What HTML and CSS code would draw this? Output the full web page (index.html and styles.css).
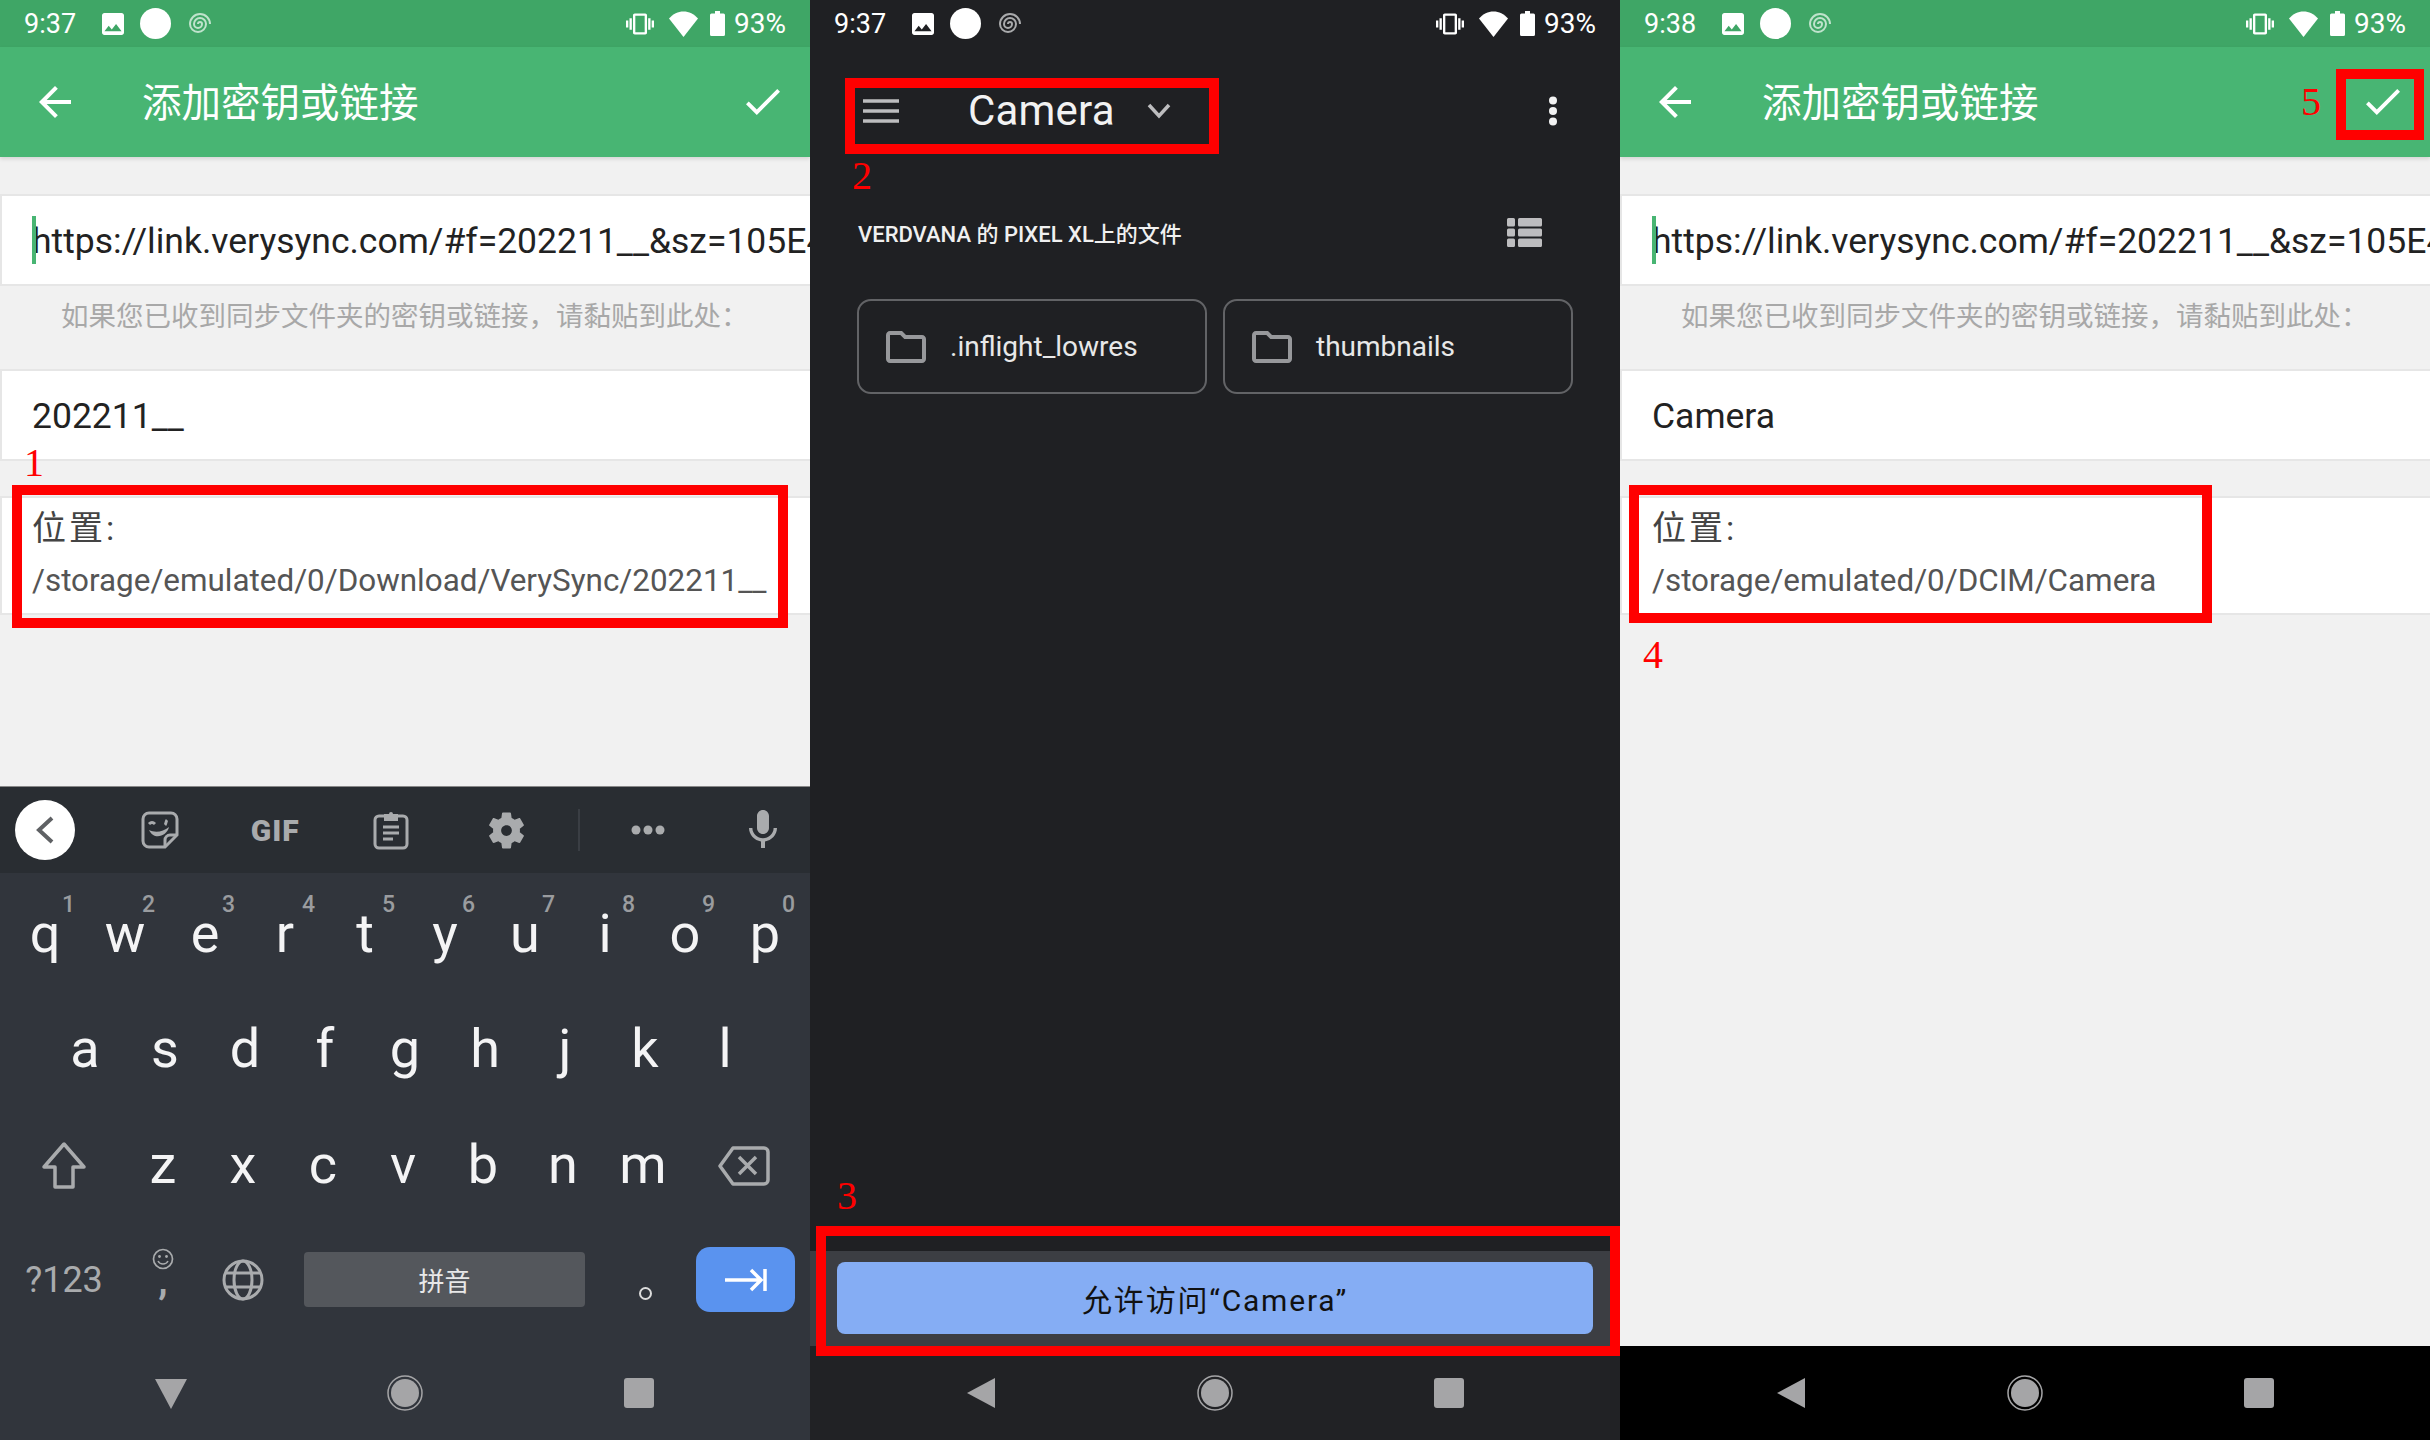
FILE: index.html
```html
<!DOCTYPE html>
<html lang="zh-CN">
<head>
<meta charset="UTF-8">
<title>Add key or link</title>
<link rel="stylesheet" href="styles.css">
</head>
<body>

<!-- shared icons -->
<svg class="defs" xmlns="http://www.w3.org/2000/svg">
  <symbol id="i-image" viewBox="3 3 18 18"><path fill="currentColor" fill-rule="evenodd" d="M21 19V5c0-1.1-.9-2-2-2H5c-1.1 0-2 .9-2 2v14c0 1.1.9 2 2 2h14c1.1 0 2-.9 2-2zM8.5 13.5l2.5 3.01L14.5 12l4.5 6H5l3.5-4.5z"/></symbol>
  <symbol id="i-swirl" viewBox="1 0 24 24"><path fill="none" stroke="currentColor" stroke-width="2" d="M12 12a2 2 0 0 1 4 0a4 4 0 0 1-8 0a6 6 0 0 1 12 0a8 8 0 0 1-16 0a10 10 0 0 1 20 0"/></symbol>
  <symbol id="i-vibrate" viewBox="0 0 24 24"><path fill="currentColor" d="M0 15h2V9H0v6zm3 2h2V7H3v10zm19-8v6h2V9h-2zm-3 8h2V7h-2v10zM16.500 3h-9C6.670 3 6 3.670 6 4.500v15c0 .83.67 1.500 1.500 1.500h9c.83 0 1.500-.67 1.500-1.500v-15c0-.83-.67-1.500-1.500-1.500zM16 19H8V5h8v14z"/></symbol>
  <symbol id="i-wifi" viewBox="0 0 29 26"><path fill="currentColor" d="M14.500 26 29 7.500C25 3 20 .5 14.500.5S4 3 0 7.500z"/></symbol>
  <symbol id="i-battery" viewBox="0 0 15 25"><path fill="currentColor" d="M5 0h5v2.500h3.500a1.500 1.500 0 0 1 1.500 1.500v19.500a1.500 1.500 0 0 1-1.500 1.500h-12A1.500 1.500 0 0 1 0 23.500V4a1.500 1.500 0 0 1 1.500-1.500H5z"/></symbol>
  <symbol id="i-back" viewBox="4 4 16 16"><path fill="currentColor" d="M20 11H7.830l5.590-5.590L12 4l-8 8 8 8 1.410-1.410L7.830 13H20v-2z"/></symbol>
  <symbol id="i-check" viewBox="3.400 5.600 17.600 13.400"><path fill="currentColor" d="M9 16.170L4.830 12l-1.420 1.410L9 19 21 7l-1.410-1.410z"/></symbol>
  <symbol id="i-folder" viewBox="2 4 20 16"><path fill="currentColor" d="M20 6h-8l-2-2H4c-1.100 0-1.990.9-1.990 2L2 18c0 1.100.9 2 2 2h16c1.100 0 2-.9 2-2V8c0-1.100-.9-2-2-2zm0 12H4V6h5.170l2 2H20v10z"/></symbol>
</svg>

<div class="screen">

  <!-- left phone: key form with keyboard -->
  <section class="phone phone-light">
    <div class="status status-green">
      <span class="clock">9:37</span>
      <svg class="ic-image"><use href="#i-image"/></svg>
      <span class="dot"></span>
      <svg class="ic-swirl"><use href="#i-swirl"/></svg>
      <span class="status-right">
        <svg class="ic-vibrate"><use href="#i-vibrate"/></svg>
        <svg class="ic-wifi"><use href="#i-wifi"/></svg>
        <svg class="ic-battery"><use href="#i-battery"/></svg>
        <span class="pct">93%</span>
      </span>
    </div>
    <header class="toolbar">
      <svg class="ic-back"><use href="#i-back"/></svg>
      <h1 class="toolbar-title">添加密钥或链接</h1>
      <svg class="ic-check"><use href="#i-check"/></svg>
    </header>
    <main class="form">
      <div class="field field-url"><span class="caret"></span>https://link.verysync.com/#f=202211__&amp;sz=105E4</div>
      <p class="hint">如果您已收到同步文件夹的密钥或链接，请黏贴到此处：</p>
      <div class="field">202211__</div>
      <div class="field-loc">
        <div class="loc-label">位置:</div>
        <div class="loc-path">/storage/emulated/0/Download/VerySync/202211__</div>
      </div>
    </main>
    <div class="keyboard">
      <div class="kb-tools">
        <span class="tool tool-first"><span class="collapse"><svg width="24" height="32" viewBox="0 0 24 32"><path d="M19 4 6 16l13 12" fill="none" stroke="#5f6164" stroke-width="4"/></svg></span></span>
        <span class="tool"><svg width="38" height="38" viewBox="0 0 38 38"><path d="M8 2h22a6 6 0 0 1 6 6v16L24 36H8a6 6 0 0 1-6-6V8a6 6 0 0 1 6-6z" fill="none" stroke="currentColor" stroke-width="3"/><path d="M36 24h-7a5 5 0 0 0-5 5v7" fill="none" stroke="currentColor" stroke-width="3"/><path d="M8 13c2-2 4-2 6 0M24 14c1-1 1-4 2-5" fill="none" stroke="currentColor" stroke-width="3"/><path fill="currentColor" d="M8 19c6 3 14 2 20-3-2 9-15 14-20 3z"/></svg></span>
        <span class="tool tool-gif">GIF</span>
        <span class="tool"><svg width="36" height="40" viewBox="0 0 36 40"><rect x="2" y="6" width="32" height="32" rx="4" fill="none" stroke="currentColor" stroke-width="3"/><path fill="currentColor" d="M11 4h5a2 2 0 0 1 4 0h5v7H11z"/><path d="M10 17h16M10 23h16M10 29h10" stroke="currentColor" stroke-width="3"/></svg></span>
        <span class="tool"><svg width="43" height="43" viewBox="0 0 24 24"><path fill="currentColor" fill-rule="evenodd" d="M19.430 12.980c.04-.32.07-.64.07-.98s-.03-.66-.07-.98l2.110-1.650c.19-.15.24-.42.12-.64l-2-3.460c-.12-.22-.39-.3-.61-.22l-2.490 1c-.52-.4-1.080-.73-1.690-.98l-.38-2.650C14.460 2.180 14.250 2 14 2h-4c-.25 0-.46.18-.49.42l-.38 2.650c-.61.25-1.170.59-1.690.98l-2.490-1c-.23-.09-.49 0-.61.22l-2 3.460c-.13.22-.07.49.12.64l2.110 1.650c-.04.32-.07.65-.07.98s.03.66.07.98l-2.110 1.650c-.19.15-.24.42-.12.64l2 3.460c.12.22.39.3.61.22l2.490-1c.52.4 1.080.73 1.690.98l.38 2.650c.03.24.24.42.49.42h4c.25 0 .46-.18.49-.42l.38-2.650c.61-.25 1.170-.59 1.690-.98l2.490 1c.23.09.49 0 .61-.22l2-3.460c.12-.22.07-.49-.12-.64l-2.110-1.650zM12 15c-1.660 0-3-1.340-3-3s1.340-3 3-3 3 1.340 3 3-1.340 3-3 3z"/></svg></span>
        <span class="tool-divider"></span>
        <span class="tool tool-wide"><svg width="34" height="10" viewBox="0 0 34 10"><circle cx="5" cy="5" r="4.500" fill="currentColor"/><circle cx="17" cy="5" r="4.500" fill="currentColor"/><circle cx="29" cy="5" r="4.500" fill="currentColor"/></svg></span>
        <span class="tool tool-last"><svg width="48" height="48" viewBox="0 0 24 24"><path fill="currentColor" d="M12 14c1.660 0 2.990-1.340 2.990-3L15 5c0-1.660-1.340-3-3-3S9 3.340 9 5v6c0 1.660 1.340 3 3 3zm5.300-3c0 3-2.540 5.100-5.300 5.100S6.700 14 6.700 11H5c0 3.410 2.720 6.230 6 6.720V21h2v-3.280c3.280-.48 6-3.300 6-6.720h-1.700z"/></svg></span>
      </div>
      <div class="kb-row row-top">
        <span class="key">q<sup class="num">1</sup></span>
        <span class="key">w<sup class="num">2</sup></span>
        <span class="key">e<sup class="num">3</sup></span>
        <span class="key">r<sup class="num">4</sup></span>
        <span class="key">t<sup class="num">5</sup></span>
        <span class="key">y<sup class="num">6</sup></span>
        <span class="key">u<sup class="num">7</sup></span>
        <span class="key">i<sup class="num">8</sup></span>
        <span class="key">o<sup class="num">9</sup></span>
        <span class="key">p<sup class="num">0</sup></span>
      </div>
      <div class="kb-row row-home">
        <span class="key">a</span><span class="key">s</span><span class="key">d</span><span class="key">f</span><span class="key">g</span><span class="key">h</span><span class="key">j</span><span class="key">k</span><span class="key">l</span>
      </div>
      <div class="kb-row row-shift">
        <span class="key key-side"><svg width="46" height="50" viewBox="0 0 46 50"><path d="M23 3 3 26h11v20h18V26h11z" fill="none" stroke="currentColor" stroke-width="3.500" stroke-linejoin="round"/></svg></span>
        <span class="key">z</span><span class="key">x</span><span class="key">c</span><span class="key">v</span><span class="key">b</span><span class="key">n</span><span class="key">m</span>
        <span class="key key-del"><svg width="52" height="40" viewBox="0 0 52 40"><path d="M15 2h31a4 4 0 0 1 4 4v28a4 4 0 0 1-4 4H15L2 20z" fill="none" stroke="currentColor" stroke-width="3.500" stroke-linejoin="round"/><path d="m21 11 17 17m0-17L21 28" stroke="currentColor" stroke-width="3.500"/></svg></span>
      </div>
      <div class="kb-row">
        <span class="key key-side key-sym">?123</span>
        <span class="key key-comma"><svg width="22" height="22" viewBox="0 0 22 22"><circle cx="11" cy="11" r="9.500" fill="none" stroke="currentColor" stroke-width="1.700"/><circle cx="7.500" cy="8.500" r="1.400" fill="currentColor"/><circle cx="14.500" cy="8.500" r="1.400" fill="currentColor"/><path d="M6 13c2 4 8 4 10 0" fill="none" stroke="currentColor" stroke-width="1.500"/></svg><span class="comma">,</span></span>
        <span class="key"><svg width="42" height="42" viewBox="0 0 42 42"><g fill="none" stroke="currentColor" stroke-width="3"><circle cx="21" cy="21" r="19"/><ellipse cx="21" cy="21" rx="9" ry="19"/><path d="M4 14h34M4 28h34"/></g></svg></span>
        <span class="key-space">拼音</span>
        <span class="key key-stop"><span class="stop"></span></span>
        <span class="key-enter"><svg width="42" height="24" viewBox="0 0 42 24"><path d="M0 12h36M26 2l10 10-10 10M40 1v22" fill="none" stroke="#fff" stroke-width="3.500"/></svg></span>
      </div>
      <nav class="navbar">
        <svg width="34" height="34" viewBox="0 0 34 34"><path fill="currentColor" d="M1 3h32L17 33z"/></svg>
        <svg width="36" height="36" viewBox="0 0 36 36"><circle cx="18" cy="18" r="17" fill="none" stroke="currentColor" stroke-width="1.500"/><circle cx="18" cy="18" r="14" fill="currentColor"/></svg>
        <span class="nav-square"></span>
      </nav>
    </div>
    <div class="mark mark-1"></div>
    <span class="mark-num num-1">1</span>
  </section>

  <!-- middle phone: folder picker -->
  <section class="phone phone-dark">
    <div class="status">
      <span class="clock">9:37</span>
      <svg class="ic-image"><use href="#i-image"/></svg>
      <span class="dot"></span>
      <svg class="ic-swirl ic-swirl-dark"><use href="#i-swirl"/></svg>
      <span class="status-right">
        <svg class="ic-vibrate"><use href="#i-vibrate"/></svg>
        <svg class="ic-wifi"><use href="#i-wifi"/></svg>
        <svg class="ic-battery"><use href="#i-battery"/></svg>
        <span class="pct">93%</span>
      </span>
    </div>
    <header class="picker-bar">
      <svg class="ic-menu" viewBox="0 0 36 24"><path d="M0 2h36M0 12h36M0 22h36" stroke="#bdbdbf" stroke-width="3.500"/></svg>
      <h2 class="picker-title">Camera</h2>
      <svg class="ic-chevron" viewBox="0 0 24 16"><path d="m2 2 10 11L22 2" fill="none" stroke="#bdbdbf" stroke-width="3.500"/></svg>
      <svg class="ic-more" viewBox="0 0 10 30"><circle cx="5" cy="4.500" r="4" fill="#f2f2f2"/><circle cx="5" cy="15" r="4" fill="#f2f2f2"/><circle cx="5" cy="25.500" r="4" fill="#f2f2f2"/></svg>
    </header>
    <div class="picker-sub">
      <span class="picker-source">VERDVANA 的 PIXEL XL上的文件</span>
      <svg class="ic-list" viewBox="0 0 35 29"><path fill="#bdbdbf" d="M0 1.500A1.500 1.500 0 0 1 1.500 0h5A1.500 1.500 0 0 1 8 1.500V7a1.500 1.500 0 0 1-1.500 1.500h-5A1.500 1.500 0 0 1 0 7zM0 12a1.500 1.500 0 0 1 1.500-1.500h5A1.500 1.500 0 0 1 8 12v5a1.500 1.500 0 0 1-1.500 1.500h-5A1.500 1.500 0 0 1 0 17zM0 22a1.500 1.500 0 0 1 1.500-1.500h5A1.500 1.500 0 0 1 8 22v5.500A1.500 1.500 0 0 1 6.500 29h-5A1.500 1.500 0 0 1 0 27.500zM11 1.500A1.500 1.500 0 0 1 12.500 0h21A1.500 1.500 0 0 1 35 1.500V7a1.500 1.500 0 0 1-1.500 1.500h-21A1.500 1.500 0 0 1 11 7zM11 12a1.500 1.500 0 0 1 1.500-1.500h21A1.500 1.500 0 0 1 35 12v5a1.500 1.500 0 0 1-1.500 1.500h-21A1.500 1.500 0 0 1 11 17zM11 22a1.500 1.500 0 0 1 1.500-1.500h21A1.500 1.500 0 0 1 35 22v5.500a1.500 1.500 0 0 1-1.500 1.500h-21a1.500 1.500 0 0 1-1.500-1.500z"/></svg>
    </div>
    <div class="folders">
      <div class="folder"><svg class="ic-folder"><use href="#i-folder"/></svg>.inflight_lowres</div>
      <div class="folder"><svg class="ic-folder"><use href="#i-folder"/></svg>thumbnails</div>
    </div>
    <div class="allow-bar"><button class="allow-btn">允许访问“Camera”</button></div>
    <nav class="navbar navbar-back">
      <svg width="34" height="34" viewBox="0 0 34 34"><path fill="currentColor" d="M31 2v30L3 17z"/></svg>
      <svg width="36" height="36" viewBox="0 0 36 36"><circle cx="18" cy="18" r="17" fill="none" stroke="currentColor" stroke-width="1.500"/><circle cx="18" cy="18" r="14" fill="currentColor"/></svg>
      <span class="nav-square"></span>
    </nav>
    <div class="mark mark-2"></div>
    <span class="mark-num num-2">2</span>
    <div class="mark mark-3"></div>
    <span class="mark-num num-3">3</span>
  </section>

  <!-- right phone: finished form -->
  <section class="phone phone-light">
    <div class="status status-green">
      <span class="clock">9:38</span>
      <svg class="ic-image"><use href="#i-image"/></svg>
      <span class="dot"></span>
      <svg class="ic-swirl"><use href="#i-swirl"/></svg>
      <span class="status-right">
        <svg class="ic-vibrate"><use href="#i-vibrate"/></svg>
        <svg class="ic-wifi"><use href="#i-wifi"/></svg>
        <svg class="ic-battery"><use href="#i-battery"/></svg>
        <span class="pct">93%</span>
      </span>
    </div>
    <header class="toolbar">
      <svg class="ic-back"><use href="#i-back"/></svg>
      <h1 class="toolbar-title">添加密钥或链接</h1>
      <svg class="ic-check"><use href="#i-check"/></svg>
    </header>
    <main class="form">
      <div class="field field-url"><span class="caret"></span>https://link.verysync.com/#f=202211__&amp;sz=105E4</div>
      <p class="hint">如果您已收到同步文件夹的密钥或链接，请黏贴到此处：</p>
      <div class="field">Camera</div>
      <div class="field-loc">
        <div class="loc-label">位置:</div>
        <div class="loc-path">/storage/emulated/0/DCIM/Camera</div>
      </div>
    </main>
    <nav class="navbar navbar-back navbar-black">
      <svg width="34" height="34" viewBox="0 0 34 34"><path fill="currentColor" d="M31 2v30L3 17z"/></svg>
      <svg width="36" height="36" viewBox="0 0 36 36"><circle cx="18" cy="18" r="17" fill="none" stroke="currentColor" stroke-width="1.500"/><circle cx="18" cy="18" r="14" fill="currentColor"/></svg>
      <span class="nav-square"></span>
    </nav>
    <div class="mark mark-4"></div>
    <span class="mark-num num-4">4</span>
    <div class="mark mark-5"></div>
    <span class="mark-num num-5">5</span>
  </section>

</div>
</body>
</html>
```

FILE: styles.css
```css
* {
    box-sizing: border-box;
}
body {
    margin: 0;
    font-family: Roboto, "Noto Sans CJK SC", sans-serif;
    background: #1f2023;
}
.defs {
    display: none;
}
.screen {
    display: flex;
    width: 2430px;
    height: 1440px;
    overflow: hidden;
}
.phone {
    position: relative;
    display: flex;
    flex-direction: column;
    width: 810px;
    height: 1440px;
    overflow: hidden;
}
.phone-light {
    background: #f1f1f1;
}
.phone-dark {
    background: #1f2023;
}

/* status bar */
.status {
    display: flex;
    align-items: center;
    flex: none;
    height: 47px;
    padding: 0 24px;
    color: #fff;
}
.status-green {
    background: #3fa666;
}
.clock {
    font-size: 27px;
}
.pct {
    font-size: 28px;
}
.ic-image {
    width: 22px;
    height: 22px;
    margin-left: 26px;
}
.dot {
    width: 31px;
    height: 31px;
    margin-left: 16px;
    border-radius: 50%;
    background: #fff;
}
.ic-swirl {
    width: 24px;
    height: 24px;
    margin-left: 16px;
    color: #bfe3cc;
}
.ic-swirl-dark {
    color: #a9aaac;
}
.status-right {
    display: flex;
    align-items: center;
    margin-left: auto;
}
.ic-vibrate {
    width: 28px;
    height: 28px;
}
.ic-wifi {
    width: 29px;
    height: 26px;
    margin-left: 15px;
}
.ic-battery {
    width: 15px;
    height: 25px;
    margin-left: 12px;
}
.pct {
    margin-left: 9px;
}

/* green toolbar */
.toolbar {
    display: flex;
    align-items: center;
    flex: none;
    height: 110px;
    padding: 0 30px 0 39px;
    color: #fff;
    background: #48b573;
    box-shadow: 0 2px 4px rgba(0, 0, 0, 0.12);
    z-index: 1;
}
.ic-back {
    width: 32px;
    height: 32px;
}
.toolbar-title {
    margin: 4px 0 0 71px;
    font-size: 39.500px;
    font-weight: 400;
    line-height: 1;
}
.ic-check {
    width: 34px;
    height: 26px;
    margin-left: auto;
}

/* form */
.form {
    flex: 1;
    padding-top: 37px;
}
.field {
    display: flex;
    align-items: center;
    height: 92px;
    padding: 2px 0 0 30px;
    font-size: 35.500px;
    color: #222;
    white-space: nowrap;
    overflow: hidden;
    background: #fff;
    border: 2px solid #e6e6e6;
    border-right: none;
}
.field-url {
    position: relative;
}
.caret {
    position: absolute;
    left: 30px;
    top: 20px;
    width: 4px;
    height: 48px;
    background: #48b573;
}
.hint {
    height: 83px;
    margin: 0;
    padding: 13px 0 0 61px;
    font-size: 27.500px;
    line-height: 36px;
    color: #a8a8a8;
}
.field-loc {
    height: 119px;
    margin-top: 35px;
    padding: 10px 0 0 30px;
    background: #fff;
    border: 2px solid #e6e6e6;
    border-right: none;
}
.loc-label {
    font-size: 34px;
    line-height: 40px;
    letter-spacing: 3px;
    color: #444;
}
.loc-path {
    margin-top: 13px;
    font-size: 31.400px;
    line-height: 40px;
    color: #555;
    white-space: nowrap;
}

/* keyboard */
.keyboard {
    display: flex;
    flex-direction: column;
    flex: none;
    height: 654px;
    background: #31353c;
    border-top: 1px solid #888;
}
.kb-tools {
    display: flex;
    align-items: center;
    flex: none;
    height: 86px;
    margin-bottom: 3px;
    color: #a9abad;
    background: #292d32;
}
.tool {
    display: flex;
    align-items: center;
    justify-content: center;
    flex: none;
    width: 115.500px;
}
.tool-first {
    width: 102px;
    padding-right: 12px;
}
.collapse {
    display: flex;
    align-items: center;
    justify-content: center;
    width: 60px;
    height: 60px;
    border-radius: 50%;
    background: #fff;
}
.tool-gif {
    font-size: 30px;
    font-weight: 900;
    letter-spacing: 1px;
}
.tool-divider {
    flex: none;
    width: 2px;
    height: 42px;
    margin-left: 14px;
    background: #3a3e44;
}
.tool-wide {
    width: 136px;
}
.tool-last {
    width: 94px;
}
.kb-row {
    display: flex;
    flex: none;
    height: 115px;
    padding-left: 5px;
}
.row-home {
    padding-left: 45px;
}
.row-shift {
    margin-top: 1px;
}
.row-shift svg {
    margin-top: 2px;
}
.key {
    position: relative;
    display: flex;
    align-items: center;
    justify-content: center;
    flex: none;
    width: 80px;
    font-size: 54px;
    color: #f4f4f5;
}
.key svg {
    color: #a9abad;
}
.num {
    position: absolute;
    top: 17px;
    left: 57px;
    font-size: 23px;
    font-weight: 500;
    line-height: 1;
    color: #9a9c9f;
}
.key-side {
    width: 118px;
}
.key-del {
    width: 122px;
}
.key-sym {
    font-size: 36px;
    color: #a9abad;
}
.key-comma {
    flex-direction: column;
    justify-content: flex-start;
    padding-top: 26px;
    font-size: 38px;
    line-height: 38px;
    color: #a9abad;
}
.comma {
    margin-top: -8px;
    font-weight: 700;
}
.key-space {
    display: flex;
    align-items: center;
    justify-content: center;
    align-self: center;
    flex: none;
    width: 281px;
    height: 55px;
    margin-left: 21px;
    border-radius: 4px;
    font-size: 26px;
    color: #e8e8e8;
    background: #54575c;
}
.key-stop {
    margin-left: 20px;
}
.stop {
    width: 13px;
    height: 13px;
    margin-top: 28px;
    border: 2px solid #dcdcdc;
    border-radius: 50%;
}
.key-enter {
    display: flex;
    align-items: center;
    justify-content: center;
    align-self: center;
    flex: none;
    width: 99px;
    height: 65px;
    margin-left: 11px;
    border-radius: 14px;
    background: #5a93ef;
}

/* bottom nav */
.navbar {
    display: grid;
    grid-template-columns: repeat(3, 34px);
    justify-content: space-between;
    align-items: center;
    justify-items: center;
    flex: none;
    height: 94px;
    margin-top: auto;
    padding: 0 154px;
    color: #a5a5a7;
}
.navbar-back {
    background: #212225;
}
.navbar-black {
    background: #000;
}
.nav-square {
    width: 30px;
    height: 30px;
    border-radius: 3px;
    background: currentColor;
}

/* folder picker */
.picker-bar {
    display: flex;
    align-items: center;
    flex: none;
    height: 128px;
    padding-left: 53px;
}
.ic-menu {
    width: 36px;
    height: 24px;
    flex: none;
}
.picker-title {
    margin: 0 0 0 69px;
    font-size: 42px;
    font-weight: 400;
    line-height: 1;
    letter-spacing: 0.2px;
    color: #f2f2f2;
}
.ic-chevron {
    width: 24px;
    height: 16px;
    flex: none;
    margin-left: 32px;
}
.ic-more {
    width: 10px;
    height: 30px;
    flex: none;
    margin-left: auto;
    margin-right: 62px;
}
.picker-sub {
    display: flex;
    align-items: center;
    justify-content: space-between;
    flex: none;
    height: 114px;
    padding: 0 78px 0 48px;
}
.picker-source {
    font-size: 22px;
    font-weight: 500;
    color: #f0f0f0;
}
.ic-list {
    width: 35px;
    height: 29px;
}
.folders {
    display: grid;
    grid-template-columns: 1fr 1fr;
    gap: 16px;
    margin-top: 10px;
    padding: 0 47px;
}
.folder {
    display: flex;
    align-items: center;
    height: 95px;
    padding-left: 27px;
    font-size: 28px;
    color: #e8e8e8;
    border: 2px solid #626366;
    border-radius: 14px;
}
.ic-folder {
    width: 40px;
    height: 32px;
    margin-right: 24px;
    color: #97989b;
}
.allow-bar {
    flex: none;
    height: 95px;
    margin-top: auto;
    padding: 11px 27px 0 27px;
    background: #3c3e43;
}
.allow-btn {
    display: block;
    width: 100%;
    height: 72px;
    padding: 0;
    border: none;
    border-radius: 8px;
    font-family: inherit;
    font-size: 30px;
    letter-spacing: 1.800px;
    color: #111;
    background: #85adf4;
}
.phone-dark .navbar {
    margin-top: 0;
}

/* red annotations */
.mark {
    position: absolute;
    border: 10px solid #f00;
    z-index: 2;
}
.mark-1 {
    left: 12px;
    top: 485px;
    width: 776px;
    height: 143px;
}
.mark-2 {
    left: 35px;
    top: 78px;
    width: 374px;
    height: 76px;
}
.mark-3 {
    left: 6px;
    top: 1226px;
    width: 804px;
    height: 130px;
}
.mark-4 {
    left: 9px;
    top: 485px;
    width: 583px;
    height: 138px;
}
.mark-5 {
    left: 716px;
    top: 69px;
    width: 88px;
    height: 71px;
}
.mark-num {
    position: absolute;
    font-family: "Liberation Serif", serif;
    font-size: 40px;
    line-height: 1;
    color: #f00;
    z-index: 2;
}
.num-1 {
    left: 24px;
    top: 443px;
}
.num-2 {
    left: 42px;
    top: 156px;
}
.num-3 {
    left: 27px;
    top: 1176px;
}
.num-4 {
    left: 23px;
    top: 635px;
}
.num-5 {
    left: 681px;
    top: 82px;
}
```
